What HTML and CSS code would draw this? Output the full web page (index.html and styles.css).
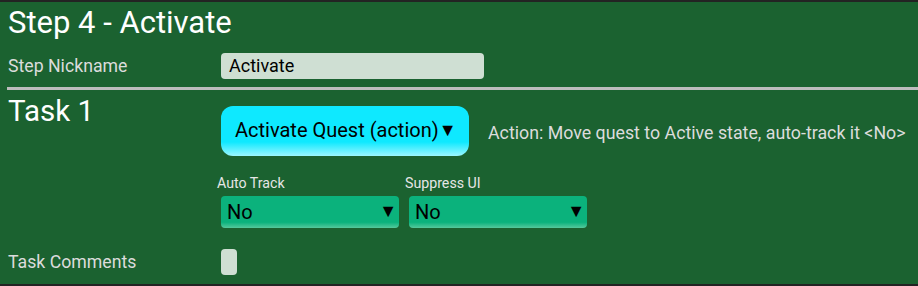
FILE: index.html
```html
<!DOCTYPE html>
<html>
<head>
<meta charset="utf-8">
<link rel="stylesheet" href="styles.css">
</head>
<body>
<div class="panel">
  <h1 class="title">Step 4 - Activate</h1>
  <div class="row nick-row">
    <div class="label">Step Nickname</div>
    <div class="input">Activate</div>
  </div>
  <hr class="rule">
  <div class="task">
    <div class="task-title">Task 1</div>
    <div class="task-body">
      <div class="action-line">
        <div class="action-btn">Activate Quest (action)<span class="caret">▼</span></div>
        <div class="action-desc">Action: Move quest to Active state, auto-track it &lt;No&gt;</div>
      </div>
      <div class="selects">
        <div class="field">
          <div class="small-label">Auto Track</div>
          <div class="select"><span>No</span><span class="caret">▼</span></div>
        </div>
        <div class="field">
          <div class="small-label">Suppress UI</div>
          <div class="select"><span>No</span><span class="caret">▼</span></div>
        </div>
      </div>
    </div>
  </div>
  <div class="row comments-row">
    <div class="label">Task Comments</div>
    <div class="textarea"></div>
  </div>
</div>
</body>
</html>
```
FILE: styles.css
```css
html, body {
  margin: 0;
  padding: 0;
  background: #1b6230;
}
body {
  width: 918px;
  height: 286px;
  overflow: hidden;
  font-family: Roboto, "Noto Sans", sans-serif;
}
.panel {
  box-sizing: border-box;
  height: 286px;
  border-top: 2px solid #232323;
  border-bottom: 2px solid #232323;
  background: #1b6230;
  color: #fff;
  padding-left: 8px;
}
.title {
  margin: 0;
  font-weight: 400;
  font-size: 31px;
  line-height: 34px;
  padding-top: 4px;
  color: #fff;
}
.row {
  display: flex;
  align-items: center;
}
.label {
  width: 213px;
  font-size: 17.7px;
  color: #dcdcdc;
}
.nick-row {
  margin-top: 13px;
}
.input {
  box-sizing: border-box;
  width: 263px;
  height: 26px;
  background: #cfdfd3;
  border-radius: 4px;
  color: #000;
  font-size: 18px;
  line-height: 26px;
  padding-left: 8px;
}
.rule {
  margin: 8px 0 0 -1px;
  border: 0;
  height: 3px;
  background: #bdbdbd;
}
.task {
  display: flex;
}
.task-title {
  width: 213px;
  font-size: 29.5px;
  line-height: 30px;
  padding-top: 6px;
  color: #fff;
}
.task-body {
  display: flex;
  flex-direction: column;
}
.action-line {
  display: flex;
  align-items: center;
  margin-top: 16px;
}
.action-btn {
  box-sizing: border-box;
  width: 248px;
  height: 50px;
  border-radius: 12px;
  background: linear-gradient(to bottom, #0ee9ff 0%, #0ee9ff 72%, #9cf6ff 100%);
  color: #000;
  font-size: 20px;
  line-height: 48px;
  padding-left: 14px;
  white-space: nowrap;
}
.action-btn .caret {
  font-size: 18px;
  vertical-align: 1px;
}
.action-desc {
  margin-left: 19px;
  font-size: 17.8px;
  color: #dcdcdc;
  padding-top: 2px;
  white-space: nowrap;
}
.selects {
  display: flex;
  gap: 10px;
  margin-top: 19px;
}
.field {
  display: flex;
  flex-direction: column;
}
.small-label {
  font-size: 14.2px;
  color: #e6e6e6;
  margin-left: -4px;
  line-height: 16px;
}
.select {
  box-sizing: border-box;
  width: 178px;
  height: 32px;
  margin-top: 5px;
  border-radius: 4px;
  background: linear-gradient(to bottom, #0bb27c 0%, #0bb27c 82%, #55c99c 100%);
  display: flex;
  align-items: center;
  justify-content: space-between;
  padding: 0 2px 0 6px;
  color: #000;
  font-size: 20px;
}
.select .caret {
  font-size: 18px;
  margin-top: -2px;
}
.comments-row {
  margin-top: 21px;
}
.textarea {
  width: 16px;
  height: 26px;
  border-radius: 4px;
  background: #cfdfd3;
}
```
